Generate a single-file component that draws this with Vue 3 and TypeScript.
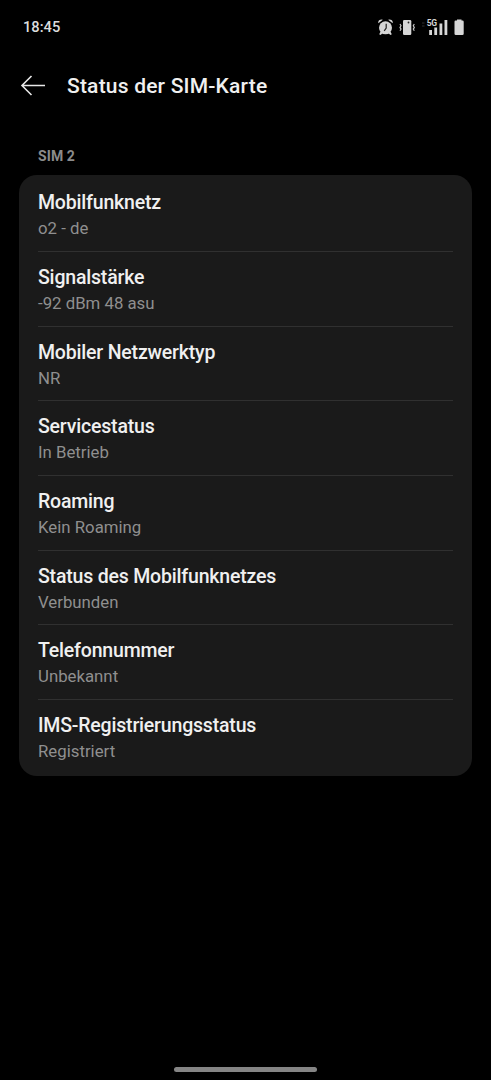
<script setup lang="ts">
interface StatusEntry {
  title: string
  value: string
}

const entries: StatusEntry[] = [
  { title: 'Mobilfunknetz', value: 'o2 - de' },
  { title: 'Signalstärke', value: '-92 dBm 48 asu' },
  { title: 'Mobiler Netzwerktyp', value: 'NR' },
  { title: 'Servicestatus', value: 'In Betrieb' },
  { title: 'Roaming', value: 'Kein Roaming' },
  { title: 'Status des Mobilfunknetzes', value: 'Verbunden' },
  { title: 'Telefonnummer', value: 'Unbekannt' },
  { title: 'IMS-Registrierungsstatus', value: 'Registriert' },
]
</script>

<template>
  <main class="screen">
    <div class="statusbar">
      <span class="clock">18:45</span>
      <svg class="indicators" viewBox="0 0 90 24" width="90" height="24">
        <g fill="#d6d6d6">
          <circle cx="7.500" cy="12.800" r="6.500" />
          <path d="M.3 8.300a3.200 3.200 0 0 1 4.600-3.500zM14.700 8.300a3.200 3.200 0 0 0-4.600-3.500z" />
          <path d="M2.500 16.800 1.200 19.200l1.300.8 2.500-2zM12.500 16.800l1.300 2.400-1.300.8-2.500-2z" />
          <rect x="25" y="5" width="8.300" height="15" rx="1.300" />
          <rect x="51.200" y="15" width="2.800" height="5" />
          <rect x="56.300" y="12.500" width="2.800" height="7.500" />
          <rect x="61.500" y="8.500" width="2.800" height="11.500" />
          <rect x="66.500" y="5" width="2.800" height="15" />
          <path d="M79 4.500h4.500v1h1a1.200 1.200 0 0 1 1.200 1.200v12a1.300 1.300 0 0 1-1.300 1.300h-6.600a1.300 1.300 0 0 1-1.300-1.300v-12a1.200 1.200 0 0 1 1.200-1.200H79z" />
        </g>
        <path d="M8.200 8.800v4.200l-2 2.800" fill="none" stroke="#222" stroke-width="1.200" />
        <circle cx="30.500" cy="7.500" r=".9" fill="#222" />
        <path d="M22 9l1 1.700-1 1.700 1 1.700-1 1.700M36.300 9l-1 1.700 1 1.700-1 1.700 1 1.700" fill="none" stroke="#c6c6c6" stroke-width="1.200" />
        <path d="M44 8h2.500M44 11h2.500" stroke="#303030" stroke-width="1" />
        <text x="48.800" y="11" class="network">5G</text>
      </svg>
    </div>
    <header class="header">
      <svg class="back" viewBox="0 0 26 22" width="26" height="22">
        <path d="M25 10.500H2M11.500 1 2 10.500 11.500 20" />
      </svg>
      <h1>Status der SIM-Karte</h1>
    </header>
    <h2 class="section">SIM 2</h2>
    <section class="card">
      <div v-for="entry in entries" :key="entry.title" class="entry">
        <div class="title">{{ entry.title }}</div>
        <div class="value">{{ entry.value }}</div>
      </div>
    </section>
    <div class="handle"></div>
  </main>
</template>

<style>
body { background: #000; }
</style>

<style scoped>
.screen { box-sizing: border-box; height: 1080px; display: flex; flex-direction: column; background: #000; color: #f0f0f0; font-family: Roboto, sans-serif; overflow: hidden; }
.statusbar { height: 54px; flex: none; display: flex; align-items: center; justify-content: space-between; padding: 0 23px; box-sizing: border-box; }
.clock { font-size: 14.7px; font-weight: 500; color: #ddd; }
.network { font-size: 8.5px; font-weight: 700; letter-spacing: -0.3px; fill: #d6d6d6; }
.header { height: 64px; flex: none; display: flex; align-items: center; gap: 21px; padding-left: 20px; }
.back { fill: none; stroke: #e8e8e8; stroke-width: 1.6; }
h1 { margin: 0; font-size: 21px; font-weight: 500; letter-spacing: 0.2px; line-height: 28px; }
.section { margin: 28px 0 0 38px; height: 28.5px; line-height: 20px; font-size: 14px; font-weight: 700; letter-spacing: 0.1px; color: #8b8b8b; }
.card { margin: 0 19px; height: 601.5px; flex: none; border-radius: 18px; background: #1a1a1a; box-sizing: border-box; padding: 2.7px 19px; }
.entry { height: 74.7px; box-sizing: border-box; padding-top: 13px; border-bottom: 1px solid #303030; }
.entry:last-child { border-bottom: 0; }
.title { font-size: 19.5px; font-weight: 500; letter-spacing: -0.19px; line-height: 26px; }
.value { font-size: 16.8px; line-height: 25px; color: #8f8f8f; }
.handle { margin: auto auto 8px; width: 143px; height: 5px; border-radius: 3px; background: #858585; }
</style>
